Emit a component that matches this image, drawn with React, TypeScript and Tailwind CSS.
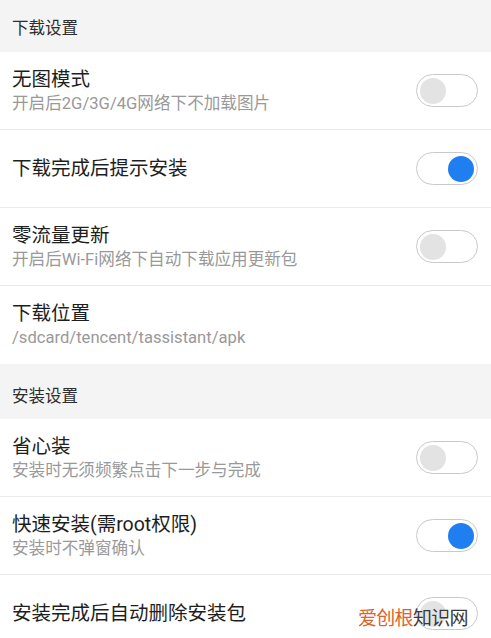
import React from "react";

type Item = { title: string; desc?: string; toggle?: boolean; on?: boolean };

const download: Item[] = [
  { title: "无图模式", desc: "开启后2G/3G/4G网络下不加载图片", toggle: true, on: false },
  { title: "下载完成后提示安装", toggle: true, on: true },
  { title: "零流量更新", desc: "开启后Wi-Fi网络下自动下载应用更新包", toggle: true, on: false },
  { title: "下载位置", desc: "/sdcard/tencent/tassistant/apk" },
];

const install: Item[] = [
  { title: "省心装", desc: "安装时无须频繁点击下一步与完成", toggle: true, on: false },
  { title: "快速安装(需root权限)", desc: "安装时不弹窗确认", toggle: true, on: true },
  { title: "安装完成后自动删除安装包", toggle: true, on: false },
];

function Toggle({ on }: { on?: boolean }) {
  return (
    <div className="w-[62px] h-[33px] rounded-full border-[1.5px] border-[#c9c9c9] bg-white flex items-center px-[3px] shrink-0">
      {on ? (
        <div className="ml-auto w-[26px] h-[26px] rounded-full bg-[#1f7ff0]" />
      ) : (
        <div className="w-[26px] h-[26px] rounded-full bg-[#e3e3e3]" />
      )}
    </div>
  );
}

function Row({ item, last }: { item: Item; last?: boolean }) {
  return (
    <div
      className={`h-[78px] flex items-center pl-3 pr-[13px] bg-white ${
        last ? "" : "border-b border-[#ececec]"
      }`}
    >
      <div className="flex-1 min-w-0">
        <div className="text-[19.5px] leading-[26px] text-[#1e1e1e]">{item.title}</div>
        {item.desc && (
          <div className="text-[16.6px] leading-[22px] text-[#999]">{item.desc}</div>
        )}
      </div>
      {item.toggle && <Toggle on={item.on} />}
    </div>
  );
}

export default function App() {
  return (
    <div
      className="relative w-[491px] h-[638px] overflow-hidden bg-white"
      style={{ fontFamily: "Roboto, 'Noto Sans CJK SC', sans-serif" }}
    >
      <div className="h-[52px] flex items-end pb-[12px] pl-3 bg-[#f4f4f4] text-[16.5px] leading-[22px] text-[#2e2e2e]">
        下载设置
      </div>
      {download.map((it, i) => (
        <Row key={it.title} item={it} last={i === download.length - 1} />
      ))}
      <div className="h-[55px] flex items-end pb-[11px] pl-3 bg-[#f4f4f4] text-[16.5px] leading-[22px] text-[#2e2e2e]">
        安装设置
      </div>
      {install.map((it) => (
        <Row key={it.title} item={it} />
      ))}
      <div className="absolute left-[358px] top-[606px] text-[19px] leading-[26px] tracking-[-0.7px]">
        <span className="text-[#e0622a]">爱创根</span>
        <span className="text-[#3a3a3a]">知识网</span>
      </div>
    </div>
  );
}
